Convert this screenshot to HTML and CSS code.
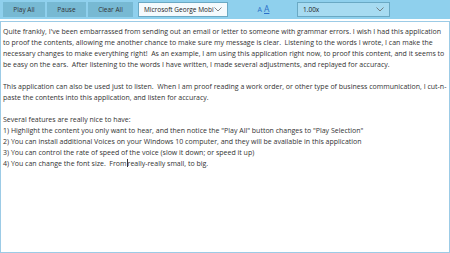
FILE: index.html
```html
<!DOCTYPE html>
<html lang="en">
<head>
    <meta charset="UTF-8">
    <title>Read Aloud</title>
    <link rel="stylesheet" href="styles.css">
</head>
<body>
    <div class="toolbar">
        <button class="btn btn-play">Play All</button>
        <button class="btn btn-pause">Pause</button>
        <button class="btn btn-clear">Clear All</button>
        <div class="combo combo-voice">
            <span class="combo-text">Microsoft George Mobi</span>
            <svg class="chev" width="8" height="5" viewBox="0 0 8 5"><path d="M0.5 0.5 L4 4 L7.5 0.5" fill="none" stroke="#666" stroke-width="0.8"/></svg>
        </div>
        <div class="sizes">
            <span class="size-small">A</span>
            <span class="size-big">A</span>
        </div>
        <div class="combo combo-rate">
            <span class="combo-text">1.00x</span>
            <svg class="chev" width="8" height="5" viewBox="0 0 8 5"><path d="M0.5 0.5 L4 4 L7.5 0.5" fill="none" stroke="#666" stroke-width="0.8"/></svg>
        </div>
    </div>
    <div class="editor">
        <p>Quite frankly, I've been embarrassed from sending out an email or letter to someone with grammar errors. I wish I had this application to proof the contents, allowing me another chance to make sure my message is clear.&nbsp; Listening to the words I wrote, I can make the necessary changes to make everything right!&nbsp; As an example, I am using this application right now, to proof this content, and it seems to be easy on the ears.&nbsp; After listening to the words I have written, I made several adjustments, and replayed for accuracy.</p>
        <p>This application can also be used just to listen.&nbsp; When I am proof reading a work order, or other type of business communication, I cut-n-paste the contents into this application, and listen for accuracy.</p>
        <p>Several features are really nice to have:<br>
        1) Highlight the content you only want to hear, and then notice the "Play All" button changes to "Play Selection"<br>
        2) You can install additional Voices on your Windows 10 computer, and they will be available in this application<br>
        3) You can control the rate of speed of the voice (slow it down; or speed it up)<br>
        4) You can change the font size.&nbsp; From<span class="caret"></span>really-really small, to big.</p>
    </div>
</body>
</html>
```

FILE: styles.css
```css
body {
    margin: 0;
    width: 450px;
    height: 253px;
    font-family: "Open Sans", "Noto Sans", sans-serif;
    background-color: #fff;
    overflow: hidden;
}

.toolbar {
    height: 19px;
    background-color: #8fd0ed;
    display: flex;
    align-items: center;
    padding-left: 3px;
}

.btn {
    height: 15px;
    border: none;
    background-color: #77b9d3;
    color: #333;
    font-family: inherit;
    font-size: 6.5px;
    padding: 0;
    margin-right: 2px;
}

.btn-play {
    width: 42px;
}

.btn-pause {
    width: 39px;
}

.btn-clear {
    width: 45px;
}

.combo {
    height: 13px;
    border: 1px solid #6aa9c4;
    display: flex;
    align-items: center;
    justify-content: space-between;
    padding: 0 5px 0 5px;
    font-size: 6.5px;
    color: #222;
}

.combo-voice {
    width: 78px;
    margin-left: 3px;
    background-color: #f4fafd;
}

.combo-rate {
    width: 81px;
    background-color: #a7dbf1;
}

.sizes {
    width: 69px;
    display: flex;
    justify-content: center;
    align-items: baseline;
    gap: 2px;
    color: #2a6fc9;
    padding-left: 2px;
    box-sizing: border-box;
    line-height: 1;
}

.size-small {
    font-size: 7px;
}

.size-big {
    font-size: 8.5px;
    text-decoration: underline;
}

.editor {
    margin-top: 2px;
    height: 232px;
    border: 1px solid #9ccbe6;
    box-sizing: border-box;
    padding: 4px 2px;
    font-size: 7px;
    line-height: 11px;
    color: #333;
}

.editor p {
    margin: 0 0 11px 0;
}

.caret {
    display: inline-block;
    width: 1px;
    height: 8px;
    background-color: #333;
    vertical-align: -1px;
}
```
